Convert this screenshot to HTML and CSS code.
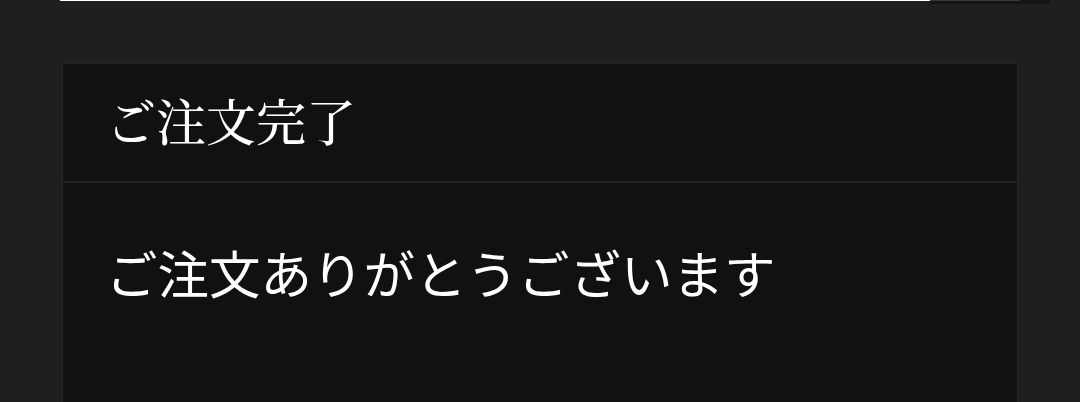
FILE: index.html
```
<!DOCTYPE html>
<html lang="ja">
<head>
<meta charset="utf-8">
<link rel="stylesheet" href="styles.css">
</head>
<body>
<div class="topbar">
  <div class="search-input"></div>
  <div class="search-tail">
    <div class="search-btn"></div>
  </div>
</div>
<div class="card">
  <div class="card-header"><h1 class="title">ご注文完了</h1></div>
  <div class="card-body"><p class="message">ご注文ありがとうございます</p></div>
</div>
</body>
</html>
```
FILE: styles.css
```
html, body { margin: 0; padding: 0; }
body {
  background: #1f1f1f;
  width: 1080px;
  height: 402px;
  overflow: hidden;
}
.topbar {
  display: flex;
  align-items: flex-start;
  padding-left: 60px;
  height: 4px;
}
.search-input {
  width: 870px;
  height: 1px;
  background: #ffffff;
}
.search-tail {
  width: 120px;
  height: 4px;
  background: #141414;
}
.search-btn {
  width: 90px;
  height: 1px;
  background: #3a3a3a;
}
.card {
  margin: 59px 0 0 62px;
  width: 956px;
  background: #252525;
  padding: 1px 1px 0 1px;
  box-sizing: border-box;
  display: flex;
  flex-direction: column;
  gap: 2px;
  height: 340px;
}
.card-header {
  background: #111111;
  height: 117px;
  display: flex;
  align-items: center;
  padding-left: 43px;
  padding-bottom: 8px;
  box-sizing: border-box;
}
.title {
  margin: 0;
  color: #ffffff;
  font-family: "Noto Serif CJK JP", serif;
  font-weight: 500;
  font-size: 50px;
  line-height: 1;
}
.card-body {
  background: #111111;
  flex: 1;
  padding: 63px 0 0 43px;
}
.message {
  margin: 0;
  color: #ffffff;
  font-family: "Noto Sans CJK JP", sans-serif;
  font-size: 51.5px;
  line-height: 1;
}
```
